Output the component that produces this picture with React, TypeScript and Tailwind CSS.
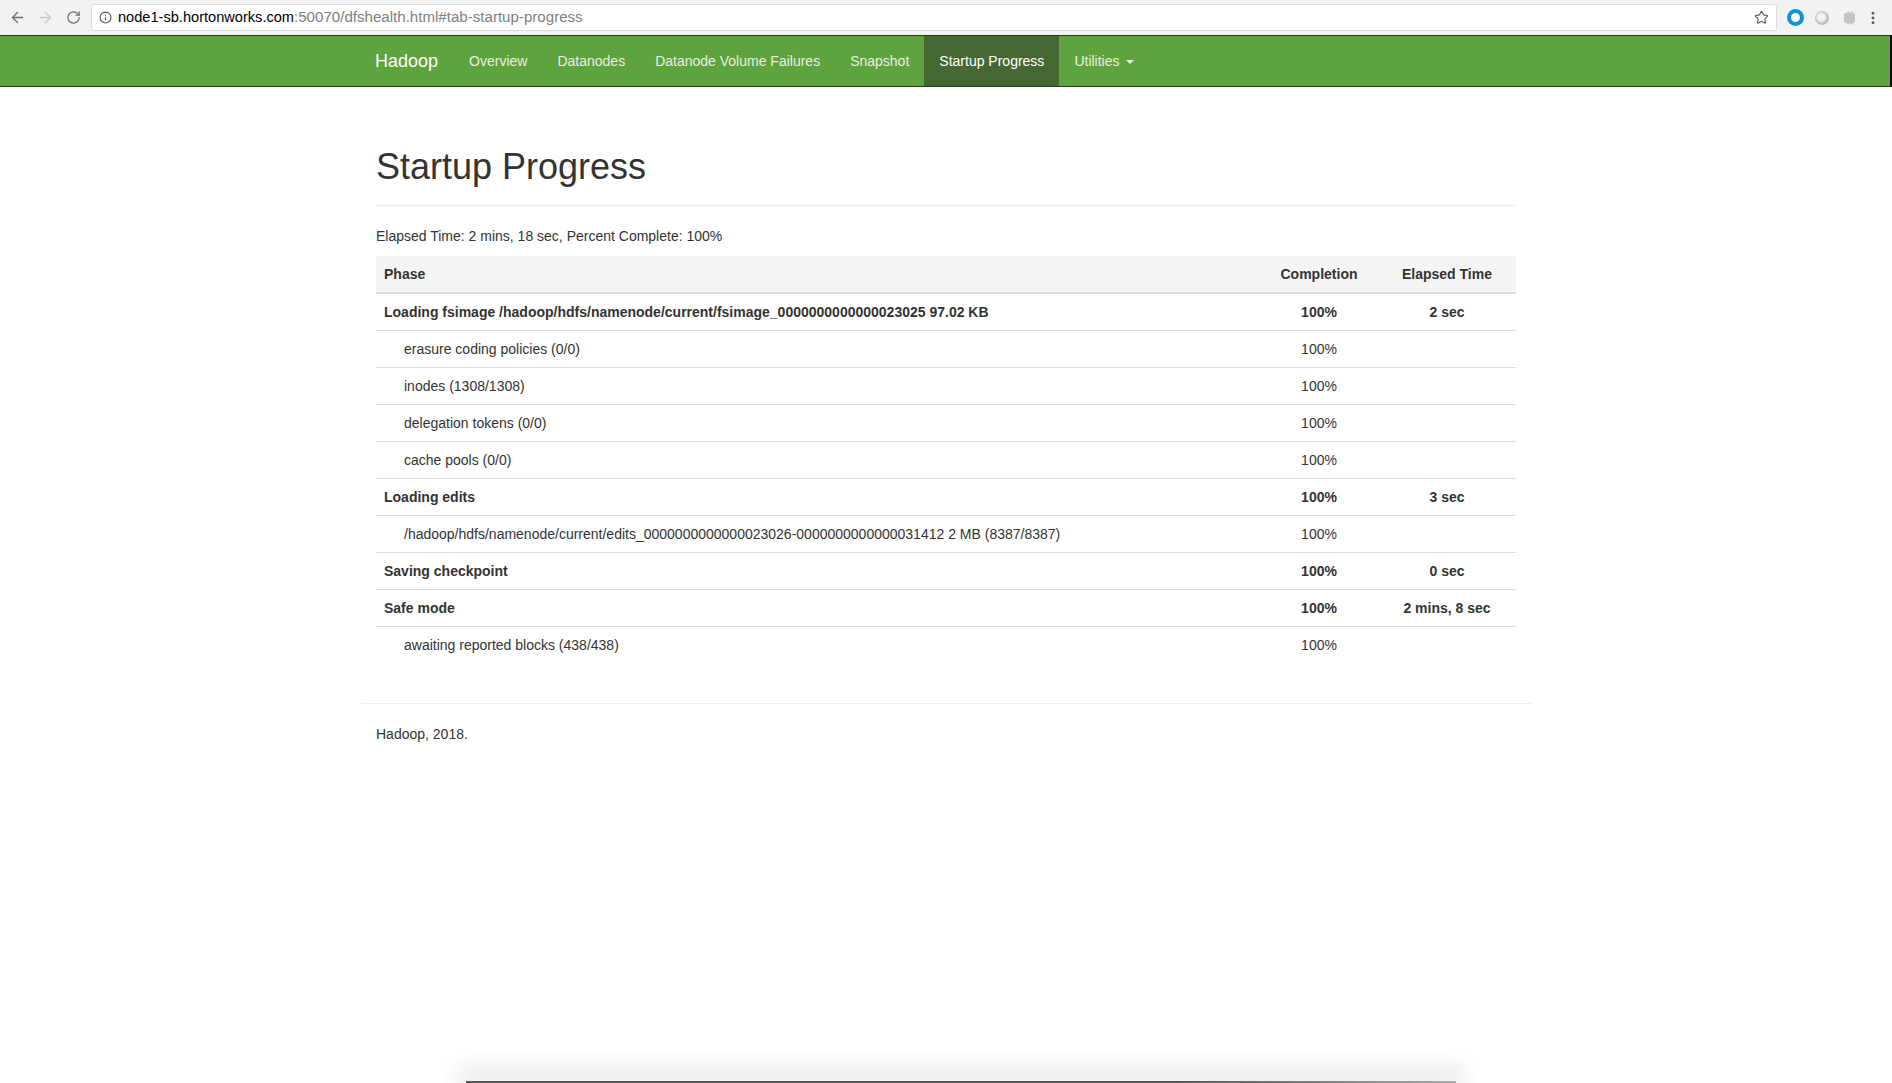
import { ArrowLeft, ArrowRight, Info, MoreVertical, RotateCw, Star } from "lucide-react";

const navItems = ["Overview", "Datanodes", "Datanode Volume Failures", "Snapshot"];

type Row = { phase: string; done: string; time?: string; main?: boolean };

const rows: Row[] = [
  { phase: "Loading fsimage /hadoop/hdfs/namenode/current/fsimage_0000000000000023025 97.02 KB", done: "100%", time: "2 sec", main: true },
  { phase: "erasure coding policies (0/0)", done: "100%" },
  { phase: "inodes (1308/1308)", done: "100%" },
  { phase: "delegation tokens (0/0)", done: "100%" },
  { phase: "cache pools (0/0)", done: "100%" },
  { phase: "Loading edits", done: "100%", time: "3 sec", main: true },
  { phase: "/hadoop/hdfs/namenode/current/edits_0000000000000023026-0000000000000031412 2 MB (8387/8387)", done: "100%" },
  { phase: "Saving checkpoint", done: "100%", time: "0 sec", main: true },
  { phase: "Safe mode", done: "100%", time: "2 mins, 8 sec", main: true },
  { phase: "awaiting reported blocks (438/438)", done: "100%" },
];

const BrowserBar = () => (
  <div className="flex h-[35px] items-center bg-[#f2f2f2] pl-[9px] pr-[11px]">
    <ArrowLeft size={17} strokeWidth={1.8} className="text-[#6e6e6e]" />
    <ArrowRight size={17} strokeWidth={1.8} className="ml-[11px] text-[#c8c8c8]" />
    <RotateCw size={15} strokeWidth={2} className="ml-[12px] text-[#6e6e6e]" />
    <div className="ml-[10px] flex h-[27px] flex-1 items-center rounded-[3px] border border-[#dcdcdc] bg-white pl-[7px] pr-[7px]">
      <Info size={13} strokeWidth={2} className="text-[#555]" />
      <span className="ml-[6px] text-[15.1px] text-[#808080]">
        <span className="text-[14.6px] text-black">node1-sb.hortonworks.com</span>:50070/dfshealth.html#tab-startup-progress
      </span>
      <Star size={15} strokeWidth={1.8} className="ml-auto text-[#5f5f5f]" />
    </div>
    <div className="ml-[10px] h-[17px] w-[17px] rounded-full border-[4px] border-[#0b96d9] bg-white" />
    <div className="ml-[11px] h-[14px] w-[14px] rounded-full bg-[radial-gradient(circle_at_45%_45%,#f2f2f2_30%,#b8b8b8_62%,#c6c6c6_100%)]" />
    <svg width="11" height="14" viewBox="0 0 10 12" className="ml-[15px]">
      <path d="M0 2h2V1h2V0h1v1h2V0h1v2h2v8H8v2H7v-1H5v1H4v-1H2v-1H0z" fill="#c4c4c4" />
    </svg>
    <MoreVertical size={16} strokeWidth={2.4} className="ml-[10px] text-[#5f5f5f]" />
  </div>
);

const NavBar = () => (
  <nav className="flex h-[52px] justify-center border-y border-[#2c3a22] border-r-2 border-r-black bg-[#5fa33e]">
    <div className="flex w-[1140px]">
      <a className="flex items-center pr-[16px] text-[18px] text-white">Hadoop</a>
      {navItems.map((item) => (
        <a key={item} className="flex items-center px-[15px] text-[14px] text-[#e6f0df]">
          {item}
        </a>
      ))}
      <a className="flex items-center bg-[#456832] px-[15px] text-[14px] text-white">Startup Progress</a>
      <a className="flex items-center px-[15px] text-[14px] text-[#e6f0df]">
        Utilities
        <span className="ml-[6px] mt-[2px] h-0 w-0 border-x-[4px] border-t-[4px] border-x-transparent border-t-[#e6f0df]" />
      </a>
    </div>
  </nav>
);

const ProgressTable = () => (
  <table className="w-full table-fixed border-collapse text-[14px]">
    <colgroup>
      <col />
      <col className="w-[118px]" />
      <col className="w-[138px]" />
    </colgroup>
    <thead>
      <tr className="h-[37px] border-b-2 border-[#dddddd] bg-[#f5f5f5] font-bold">
        <th className="px-2 text-left">Phase</th>
        <th className="text-center">Completion</th>
        <th className="text-center">Elapsed Time</th>
      </tr>
    </thead>
    <tbody>
      {rows.map((row, i) => (
        <tr key={i} className={`h-[37px] ${i > 0 ? "border-t border-[#dddddd]" : ""} ${row.main ? "font-bold" : ""}`}>
          <td className={row.main ? "px-2 pt-[2px]" : "pl-7 pr-2 pt-[2px]"}>{row.phase}</td>
          <td className="pt-[2px] text-center">{row.done}</td>
          <td className="pt-[2px] text-center">{row.time}</td>
        </tr>
      ))}
    </tbody>
  </table>
);

const App = () => {
  return (
    <div className="relative h-[1083px] overflow-hidden bg-white font-['Liberation_Sans',Arial,sans-serif] text-[#333333]">
      <BrowserBar />
      <NavBar />
      <main className="mx-auto w-[1170px]">
        <div className="px-[15px]">
          <div className="mt-[60px] border-b border-[#eeeeee] pb-[18px]">
            <h1 className="text-[36px] leading-[40px]">Startup Progress</h1>
          </div>
          <p className="mt-[20px] text-[14px] leading-[20px]">Elapsed Time: 2 mins, 18 sec, Percent Complete: 100%</p>
          <div className="mt-[10px]">
            <ProgressTable />
          </div>
        </div>
        <hr className="mt-[40px] border-[#eeeeee]" />
        <p className="mt-[20px] px-[15px] text-[14px] leading-[20px]">Hadoop, 2018.</p>
      </main>
      {/* window of the next screenshot peeking in at the bottom */}
      <div className="absolute bottom-0 left-[466px] h-[2px] w-[990px] bg-gradient-to-r from-[#555555] from-70% to-[#aaaaaa] shadow-[0_-4px_26px_10px_rgba(0,0,0,0.09)]" />
    </div>
  );
};

export default App;
